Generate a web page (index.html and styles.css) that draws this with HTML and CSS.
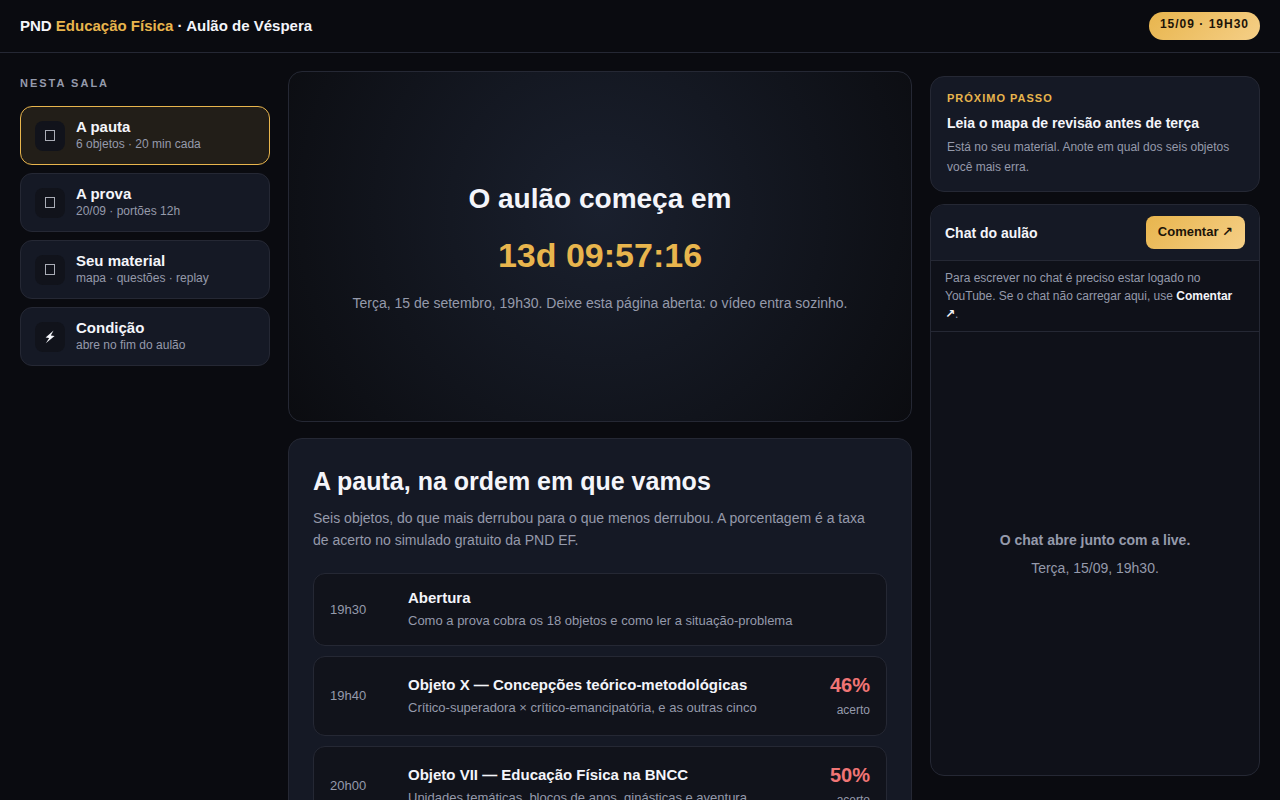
FILE: index.html
```html
<!DOCTYPE html>
<html lang="pt-BR">
<head>
  <meta charset="UTF-8">
  <meta name="viewport" content="width=device-width, initial-scale=1.0">
  <meta name="theme-color" content="#0a0b10">
  <title>PND Educação Física · Aulão de Véspera</title>
  <link rel="stylesheet" href="styles.css">
</head>
<body>
  <header class="topbar">
    <div class="brand">PND <span>Educação Física</span> · Aulão de Véspera</div>
    <div class="pill">15/09 · 19H30</div>
  </header>

  <div class="room">
    <!-- Menu da sala -->
    <nav class="side">
      <h2 class="side-title">Nesta sala</h2>
      <button type="button" class="tab active">
        <span class="tab-icon"><svg width="10" height="12" viewBox="0 0 10 12"><rect x="0.5" y="0.5" width="9" height="10"/></svg></span>
        <span class="tab-text"><b>A pauta</b><small>6 objetos · 20 min cada</small></span>
      </button>
      <button type="button" class="tab">
        <span class="tab-icon"><svg width="10" height="12" viewBox="0 0 10 12"><rect x="0.5" y="0.5" width="9" height="10"/></svg></span>
        <span class="tab-text"><b>A prova</b><small>20/09 · portões 12h</small></span>
      </button>
      <button type="button" class="tab">
        <span class="tab-icon"><svg width="10" height="12" viewBox="0 0 10 12"><rect x="0.5" y="0.5" width="9" height="10"/></svg></span>
        <span class="tab-text"><b>Seu material</b><small>mapa · questões · replay</small></span>
      </button>
      <button type="button" class="tab">
        <span class="tab-icon"><svg class="bolt" width="10" height="14" viewBox="0 0 10 14"><path d="M8.6 0.6 0.6 7.6 4.2 7.9 0.8 13.2 9.6 5.9 5.8 5.6z"/></svg></span>
        <span class="tab-text"><b>Condição</b><small>abre no fim do aulão</small></span>
      </button>
    </nav>

    <main class="main">
      <section class="player">
        <h1>O aulão começa em</h1>
        <div class="countdown">13d 09:57:16</div>
        <p>Terça, 15 de setembro, 19h30. Deixe esta página aberta: o vídeo entra sozinho.</p>
      </section>

      <section class="panel">
        <h2>A pauta, na ordem em que vamos</h2>
        <p class="lead">Seis objetos, do que mais derrubou para o que menos derrubou. A porcentagem é a taxa de acerto no simulado gratuito da PND EF.</p>
        <ul class="agenda">
          <li class="item">
            <span class="time">19h30</span>
            <div class="what">
              <h3>Abertura</h3>
              <p>Como a prova cobra os 18 objetos e como ler a situação-problema</p>
            </div>
          </li>
          <li class="item">
            <span class="time">19h40</span>
            <div class="what">
              <h3>Objeto X — Concepções teórico-metodológicas</h3>
              <p>Crítico-superadora × crítico-emancipatória, e as outras cinco</p>
            </div>
            <div class="rate"><b>46%</b><small>acerto</small></div>
          </li>
          <li class="item">
            <span class="time">20h00</span>
            <div class="what">
              <h3>Objeto VII — Educação Física na BNCC</h3>
              <p>Unidades temáticas, blocos de anos, ginásticas e aventura</p>
            </div>
            <div class="rate"><b>50%</b><small>acerto</small></div>
          </li>
        </ul>
      </section>
    </main>

    <aside class="aside">
      <section class="next">
        <div class="next-label">Próximo passo</div>
        <h3>Leia o mapa de revisão antes de terça</h3>
        <p>Está no seu material. Anote em qual dos seis objetos você mais erra.</p>
      </section>

      <section class="chat">
        <div class="chat-head">
          <h3>Chat do aulão</h3>
          <a class="btn" href="#">Comentar ↗</a>
        </div>
        <p class="chat-note">Para escrever no chat é preciso estar logado no YouTube. Se o chat não carregar aqui, use <b>Comentar ↗</b>.</p>
        <div class="chat-empty">
          <b>O chat abre junto com a live.</b>
          <span>Terça, 15/09, 19h30.</span>
        </div>
      </section>
    </aside>
  </div>
</body>
</html>
```
FILE: styles.css
```css
:root {
  --bg: #0a0b10;
  --card: #151925;
  --deep: #11131b;
  --line: #252834;
  --text: #f4f5fa;
  --muted: #959aab;
  --gold: #e8b54d;
  --gold-grad: linear-gradient(135deg, #e8b54d, #f5cf87);
  --red: #f07575;
}
* {
  box-sizing: border-box;
  margin: 0;
  padding: 0;
}
body {
  font-family: "Liberation Sans", Arial, "DejaVu Sans", sans-serif;
  font-size: 14px;
  line-height: 22px;
  background: var(--bg);
  color: var(--text);
}

/* Topo */
.topbar {
  display: flex;
  align-items: center;
  justify-content: space-between;
  padding: 12px 20px;
  border-bottom: 1px solid var(--line);
}
.brand {
  font-size: 15px;
  font-weight: bold;
}
.brand span {
  color: var(--gold);
}
.pill {
  padding: 3px 11px 7px;
  border-radius: 99px;
  background: var(--gold-grad);
  color: #1c1408;
  font-size: 12px;
  line-height: 18px;
  font-weight: bold;
  letter-spacing: 1px;
}

.room {
  display: grid;
  grid-template-columns: 250px minmax(0, 1fr) 330px;
  gap: 18px;
  align-items: start;
  padding: 18px 20px;
}

/* Coluna esquerda */
.side {
  position: sticky;
  top: 76px;
  display: grid;
  gap: 8px;
}
.side-title {
  margin-bottom: 8px;
  font-size: 11px;
  line-height: 14px;
  letter-spacing: 2px;
  text-transform: uppercase;
  color: var(--muted);
}
.tab {
  display: flex;
  align-items: center;
  gap: 11px;
  padding: 11px 14px;
  border: 1px solid var(--line);
  border-radius: 12px;
  background: var(--card);
  color: var(--text);
  font-family: inherit;
  text-align: left;
  cursor: pointer;
}
.tab.active {
  border-color: var(--gold);
  background: #221e18;
}
.tab-icon {
  display: grid;
  place-items: center;
  width: 30px;
  height: 30px;
  border-radius: 8px;
  background: var(--deep);
}
.tab-icon svg {
  fill: none;
  stroke: #a9acb6;
}
.tab-icon .bolt {
  fill: var(--text);
  stroke: none;
}
.tab-text b {
  display: block;
  font-size: 15px;
  line-height: 18px;
}
.tab-text small {
  display: block;
  font-size: 12px;
  line-height: 17px;
  color: var(--muted);
}

/* Centro */
.main {
  display: grid;
  gap: 16px;
}
.player {
  display: flex;
  flex-direction: column;
  align-items: center;
  justify-content: center;
  gap: 14px;
  aspect-ratio: 16 / 9;
  padding: 20px 20px 22px;
  border: 1px solid var(--line);
  border-radius: 14px;
  background: radial-gradient(circle at 50% 40%, #1a202e, #0b0c10 100%);
  text-align: center;
}
.player h1 {
  font-size: 28px;
  line-height: 42px;
}
.countdown {
  font-size: 34px;
  line-height: 42px;
  font-weight: bold;
  color: var(--gold);
  font-variant-numeric: tabular-nums;
}
.player p {
  padding-top: 2px;
  color: var(--muted);
}
.panel {
  padding: 24px;
  border: 1px solid var(--line);
  border-radius: 14px;
  background: var(--card);
}
.panel h2 {
  margin-bottom: 8px;
  font-size: 25px;
  line-height: 36px;
}
.lead {
  max-width: 72ch;
  margin-bottom: 22px;
  color: var(--muted);
}
.agenda {
  display: grid;
  gap: 10px;
  list-style: none;
}
.item {
  display: grid;
  grid-template-columns: 64px minmax(0, 1fr) auto;
  gap: 14px;
  align-items: center;
  padding: 14px 16px;
  border: 1px solid var(--line);
  border-radius: 12px;
  background: var(--deep);
}
.time {
  font-size: 13px;
  color: var(--muted);
}
.what h3 {
  margin-bottom: 2px;
  font-size: 15px;
  line-height: 20px;
}
.what p {
  font-size: 13px;
  line-height: 21px;
  color: var(--muted);
}
.rate {
  text-align: right;
}
.rate b {
  display: block;
  font-size: 20px;
  line-height: 28px;
  color: var(--red);
}
.rate small {
  display: block;
  font-size: 12px;
  line-height: 22px;
  color: var(--muted);
}

/* Coluna direita */
.aside {
  position: sticky;
  top: 76px;
  display: flex;
  flex-direction: column;
  gap: 12px;
  height: calc(100vh - 100px);
}
.next {
  padding: 14px 16px;
  border: 1px solid var(--line);
  border-radius: 14px;
  background: var(--card);
}
.next-label {
  font-size: 11px;
  line-height: 14px;
  font-weight: bold;
  letter-spacing: 1px;
  text-transform: uppercase;
  color: var(--gold);
}
.next h3 {
  margin: 7px 0 3px;
  font-size: 14px;
  line-height: 22px;
}
.next p {
  font-size: 12px;
  line-height: 20px;
  color: var(--muted);
}
.chat {
  display: flex;
  flex: 1;
  flex-direction: column;
  min-height: 0;
  border: 1px solid var(--line);
  border-radius: 14px;
  background: #0f1119;
  overflow: hidden;
}
.chat-head {
  display: flex;
  align-items: center;
  justify-content: space-between;
  padding: 11px 14px;
  border-bottom: 1px solid var(--line);
  background: var(--card);
}
.chat-head h3 {
  font-size: 14px;
}
.btn {
  padding: 5px 12px 7px;
  border-radius: 8px;
  background: var(--gold-grad);
  color: #1c1408;
  font-size: 13px;
  line-height: 21px;
  font-weight: bold;
  text-decoration: none;
}
.chat-note {
  padding: 8px 14px;
  border-bottom: 1px solid var(--line);
  font-size: 12px;
  line-height: 18px;
  color: var(--muted);
}
.chat-note b {
  color: var(--text);
}
.chat-empty {
  display: flex;
  flex: 1;
  flex-direction: column;
  align-items: center;
  justify-content: center;
  gap: 6px;
  color: var(--muted);
}
```
